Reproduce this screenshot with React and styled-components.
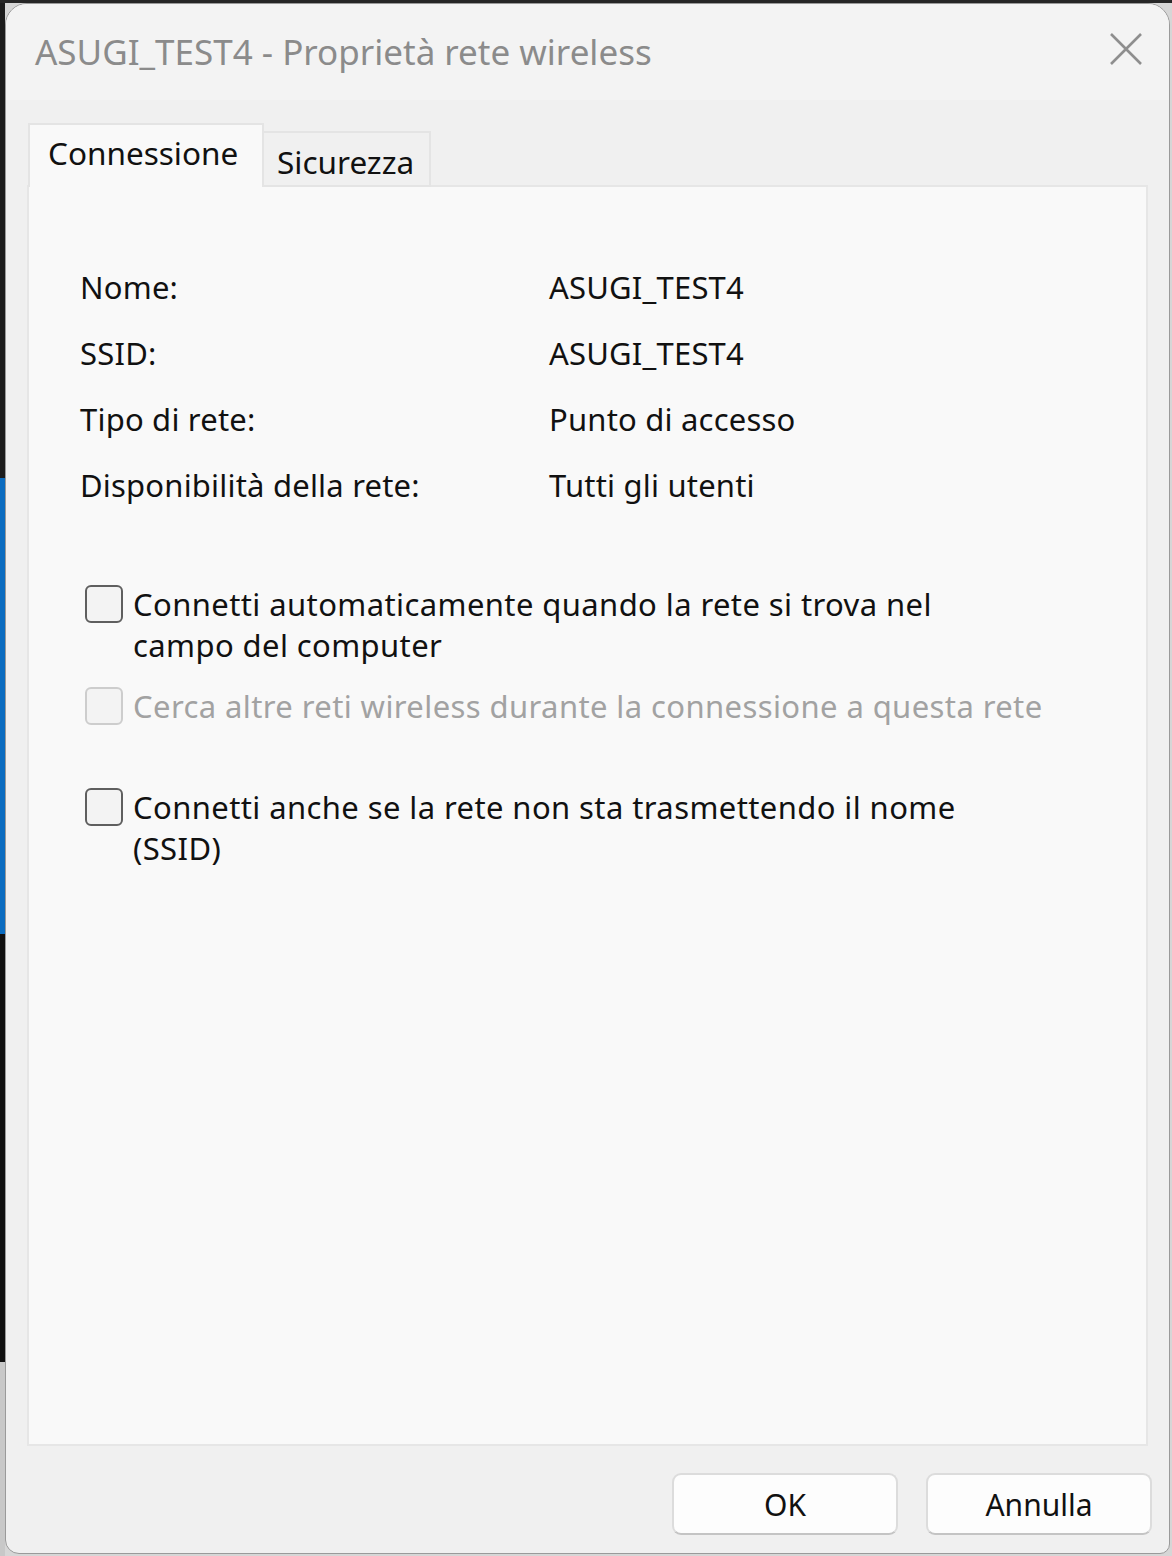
import styled, { createGlobalStyle } from "styled-components";

const GlobalStyle = createGlobalStyle`
  html, body {
    margin: 0;
    padding: 0;
  }
  body {
    width: 1172px;
    height: 1556px;
    overflow: hidden;
    background-color: #d6d6d6;
    background-image:
      linear-gradient(#262626, #262626),
      linear-gradient(
        to bottom,
        #1c1c1c 0px,
        #1c1c1c 478px,
        #0b6cc0 478px,
        #0b6cc0 934px,
        #101010 934px,
        #101010 1362px,
        #c8c8c8 1362px
      );
    background-size: 100% 3px, 5px 100%;
    background-position: 0 0, 0 0;
    background-repeat: no-repeat;
    font-family: "Noto Sans", "Open Sans", sans-serif;
  }
`;

const Screen = styled.div`
  box-sizing: border-box;
  width: 1172px;
  height: 1556px;
  padding: 3px 2px 2px 5px;
  display: flex;
`;

const Window = styled.div`
  flex: 1;
  display: flex;
  flex-direction: column;
  background: #f0f0f0;
  border: 1px solid #9a9a9a;
  border-radius: 22px 22px 10px 14px;
  overflow: hidden;
`;

const TitleBar = styled.div`
  height: 96px;
  display: flex;
  align-items: center;
  justify-content: space-between;
  padding: 0 25px 0 29px;
  background: #f3f3f3;
`;

const Title = styled.div`
  font-size: 35px;
  color: #8b8b8b;
  margin-top: -2px;
`;

const CloseButton = styled.div`
  width: 36px;
  height: 36px;
  display: flex;
  align-items: center;
  justify-content: center;
  margin-top: -6px;
`;

const Body = styled.div`
  flex: 1;
  display: flex;
  flex-direction: column;
  padding: 23px 21px 18px 21px;
`;

const Tabs = styled.div`
  display: flex;
  align-items: flex-end;
  height: 64px;
  margin-bottom: -2px;
  position: relative;
  z-index: 1;
`;

const Tab = styled.div`
  box-sizing: border-box;
  display: flex;
  align-items: center;
  font-size: 31.5px;
  color: #111;
  height: ${({ $active }) => ($active ? "64px" : "56px")};
  background: ${({ $active }) => ($active ? "#f9f9f9" : "#f0f0f0")};
  border: 2px solid #e4e4e4;
  border-bottom: ${({ $active }) => ($active ? "none" : "2px solid #e4e4e4")};
  border-left: ${({ $active }) => ($active ? "2px solid #e4e4e4" : "none")};
  padding: ${({ $active }) => ($active ? "0 0 8px 18px" : "4px 0 0 13px")};
  margin-left: ${({ $active }) => ($active ? "1px" : "0")};
  width: ${({ $w }) => $w}px;
`;

const Panel = styled.div`
  flex: 1;
  background: #f9f9f9;
  border: 2px solid #e6e6e6;
  padding: 67px 0 0 51px;
  display: flex;
  flex-direction: column;
`;

const InfoGrid = styled.div`
  display: grid;
  grid-template-columns: 469px 1fr;
  grid-auto-rows: 66px;
  align-items: center;
  font-size: 31px;
  letter-spacing: 0.2px;
  color: #111;
`;

const Checks = styled.div`
  display: flex;
  flex-direction: column;
  margin-top: 66px;
`;

const CheckRow = styled.label`
  display: flex;
  align-items: flex-start;
  gap: 10px;
  margin-left: 5px;
  margin-bottom: ${({ $gap }) => $gap || 0}px;
  font-size: 31px;
  letter-spacing: 0.4px;
  line-height: 41px;
  white-space: nowrap;
  color: ${({ $disabled }) => ($disabled ? "#a2a2a2" : "#111")};
`;

const Box = styled.span`
  box-sizing: border-box;
  flex: none;
  width: 38px;
  height: 38px;
  margin-top: 1px;
  border-radius: 6px;
  background: #f3f3f3;
  border: 2px solid ${({ $disabled }) => ($disabled ? "#cdcdcd" : "#5f5f5f")};
`;

const Footer = styled.div`
  display: flex;
  justify-content: flex-end;
  gap: 28px;
  padding-top: 27px;
  margin-right: -4px;
`;

const Button = styled.div`
  box-sizing: border-box;
  width: 226px;
  height: 62px;
  display: flex;
  align-items: center;
  justify-content: center;
  background: #fdfdfd;
  border: 2px solid #dcdcdc;
  border-bottom-color: #c4c4c4;
  border-radius: 9px;
  font-size: 30px;
  color: #111;
`;

const info = [
  ["Nome:", "ASUGI_TEST4"],
  ["SSID:", "ASUGI_TEST4"],
  ["Tipo di rete:", "Punto di accesso"],
  ["Disponibilità della rete:", "Tutti gli utenti"],
];

export default function App() {
  return (
    <>
      <GlobalStyle />
      <Screen>
        <Window>
          <TitleBar>
            <Title>ASUGI_TEST4 - Proprietà rete wireless</Title>
            <CloseButton>
              <svg width="34" height="34" viewBox="0 0 34 34">
                <path
                  d="M2 2 L32 32 M32 2 L2 32"
                  stroke="#8e8e8e"
                  strokeWidth="2.6"
                  fill="none"
                />
              </svg>
            </CloseButton>
          </TitleBar>
          <Body>
            <Tabs>
              <Tab $active $w={236}>Connessione</Tab>
              <Tab $w={167}>Sicurezza</Tab>
            </Tabs>
            <Panel>
              <InfoGrid>
                {info.map(([k, v]) => [
                  <span key={k}>{k}</span>,
                  <span key={k + "v"}>{v}</span>,
                ])}
              </InfoGrid>
              <Checks>
                <CheckRow $gap={20}>
                  <Box />
                  <span>
                    Connetti automaticamente quando la rete si trova nel
                    <br />
                    campo del computer
                  </span>
                </CheckRow>
                <CheckRow $gap={60} $disabled>
                  <Box $disabled />
                  <span>Cerca altre reti wireless durante la connessione a questa rete</span>
                </CheckRow>
                <CheckRow>
                  <Box />
                  <span>
                    Connetti anche se la rete non sta trasmettendo il nome
                    <br />
                    (SSID)
                  </span>
                </CheckRow>
              </Checks>
            </Panel>
            <Footer>
              <Button>OK</Button>
              <Button>Annulla</Button>
            </Footer>
          </Body>
        </Window>
      </Screen>
    </>
  );
}
